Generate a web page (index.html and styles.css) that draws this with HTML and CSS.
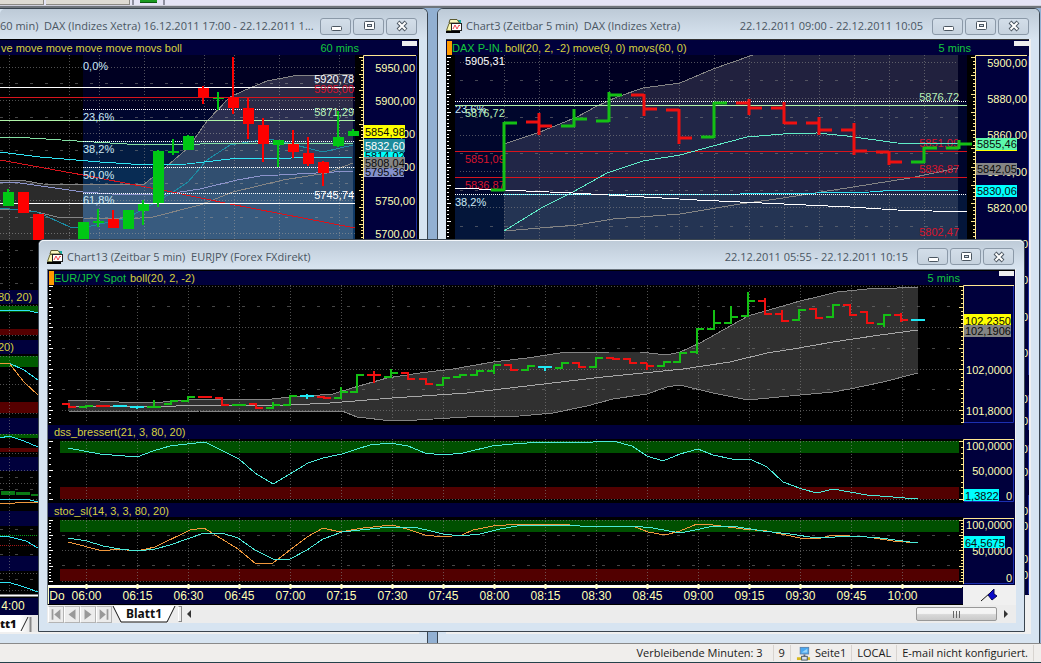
FILE: index.html
```html
<!DOCTYPE html>
<html lang="de">
<head>
<meta charset="utf-8">
<title>Chart Workspace</title>
<link rel="stylesheet" href="styles.css">
</head>
<body>
<svg class="defs" aria-hidden="true">
  <symbol id="i-min" viewBox="0 0 14 12"><rect x="2.500" y="6.500" width="10" height="4" rx="1" fill="#fff" stroke="#4b5661"/></symbol>
  <symbol id="i-max" viewBox="0 0 14 12"><rect x="2.500" y="1.500" width="10" height="8" rx="1" fill="#fff" stroke="#4b5661"/><rect x="5.500" y="4.500" width="4" height="2" fill="#d5dee8" stroke="#4b5661"/></symbol>
  <symbol id="i-close" viewBox="0 0 14 12"><path d="M3 2L11 10M11 2L3 10" stroke="#4b5661" stroke-width="4"/><path d="M3.500 2.500L10.500 9.500M10.500 2.500L3.500 9.500" stroke="#fff" stroke-width="2"/></symbol>
  <symbol id="i-chart" viewBox="0 0 16 16"><path d="M1 12L12 2H15V6L5 14Z" fill="#12a8a0"/><path d="M4 1.500H11L13.500 5H3Z" fill="#faf8c0" stroke="#5c5a30"/><path d="M.5 12.500L3 5.500H6V13Z" fill="#fbf7b0" stroke="#6a6830"/><path d="M0 14H14" stroke="#000" stroke-width="2"/><rect x="5.500" y="5.500" width="10" height="7" fill="#fff" stroke="#222"/><path d="M7 11L9 7L11 11L13 7L14 8" fill="none" stroke="#f04850"/></symbol>
</svg>

<div class="toolbar">
  <span class="tool-slot short"></span><span class="tool-slot"></span><span class="tool-sep"></span><span class="tool-green"></span><span class="tool-sep"></span>
</div>

<main class="workspace">
  <section class="window win-60">
    <header class="titlebar">
      <h2 class="title">60 min)&nbsp; DAX (Indizes Xetra) 16.12.2011 17:00 - 22.12.2011 1...</h2>
      <div class="controls">
        <button type="button" aria-label="Minimieren"><svg><use href="#i-min"/></svg></button>
        <button type="button" aria-label="Maximieren"><svg><use href="#i-max"/></svg></button>
        <button type="button" aria-label="Schließen"><svg><use href="#i-close"/></svg></button>
      </div>
    </header>
    <div class="client">
      <svg class="chart" viewBox="0 39 419 576" id="chart60">
        <rect y="39" width="419" height="576" fill="#000"/>
        <rect y="40" width="418" height="15" fill="#00003c"/>
        <rect x="402" y="41" width="15" height="5" fill="#eee"/>
        <rect x="83" y="55" width="272" height="54" fill="#000022"/>
        <rect x="83" y="109" width="272" height="32" fill="#00062e"/>
        <rect x="83" y="141" width="272" height="26" fill="#031c42"/>
        <rect x="83" y="167" width="272" height="26" fill="#082c54"/>
        <rect x="83" y="193" width="272" height="50" fill="#103a66"/>
        <g class="grid" data-x="9.5 69.5 99.5 144.500 204.5 234.5 279.5 339.5" data-y="67.5 100.5 133.5 167.5 200.5 233.5" data-dash="83.5 117.5 150.5 183.5 217.5" data-box="0 55 355 240"></g>
        <path class="band" d="M0 180H20L43 184L143 185L167 166L188 148L207 121L230 97L243 91L267 81L293 76L353 74V240H0Z"/>
        <polyline class="ln grey" points="0,180 20,180 43,184 143,185 167,166 188,148 207,121 230,97 243,91 267,81 293,76 353,74"/>
        <polyline class="ln grey" points="0,209 20,209 37,212 57,217 83,218 127,219 153,217 200,205 233,192 283,180 327,173 353,163"/>
        <polyline class="ln lav" points="0,182 20,183 83,192 127,195 167,194 200,189 237,180 260,176 353,171"/>
        <polyline class="ln teal" points="0,208 37,212 70,227 87,227 127,218 153,204 173,192 188,182 207,160 230,145 267,139 280,141 323,152 353,145"/>
        <polyline class="ln mint" points="0,137 30,138 77,141 127,144 200,144 230,143 353,143"/>
        <polyline class="ln cyan" points="0,152 40,157 100,162 147,165 187,164 230,159 353,157"/>
        <polyline class="ln red" points="0,160 83,175 167,191 230,204 355,228"/>
        <path class="ln white" d="M0 87.500H355M0 203.500H355"/>
        <path class="ln red" d="M0 97.500H355"/>
        <path class="ln pale" d="M0 120.500H355"/>
        <path class="ln dots" d="M83 109.500H355M83 141.500H355M83 167.500H355M83 193.500H355"/>
        <g id="candles60"></g>
        <path class="ticks" data-x="363" data-dir="-1" data-from="57" data-to="240" data-step="3.33"/>
        <g class="lbl">
          <text x="1" y="52" class="c-yel">ve move move move move movs boll</text>
          <text x="359" y="52" class="c-grn end">60 mins</text>
          <g class="c-fib"><text x="83" y="70">0,0%</text><text x="83" y="121">23,6%</text><text x="83" y="153">38,2%</text><text x="83" y="179">50,0%</text><text x="83" y="204">61,8%</text></g>
          <text x="354" y="83" class="end">5920,78</text><text x="354" y="93" class="end c-red">5905,00</text><text x="354" y="116" class="end c-pale">5871,29</text><text x="354" y="199" class="end">5745,74</text>
        </g>
        <rect x="363" y="55" width="54" height="185" fill="#00003c"/>
        <path d="M363.500 240V55.500H416" class="axisline"/><path d="M416.500 56V240" stroke="#1c2f9c"/>
        <g class="lbl axis">
          <text x="415" y="72">5950,00</text><text x="415" y="105">5900,00</text><text x="415" y="138">5850,00</text><text x="415" y="171">5800,00</text><text x="415" y="205">5750,00</text><text x="415" y="238">5700,00</text>
        </g>
        <g class="lbl tag">
          <rect x="364" y="168" width="40" height="9" fill="#8490cc"/><text x="365" y="176">5795,36</text>
          <rect x="364" y="151" width="40" height="11" fill="#0ff"/><text x="365" y="160">5814,02</text>
          <rect x="364" y="157" width="41" height="11" fill="#858585"/><text x="365" y="167">5808,04</text>
          <rect x="364" y="139" width="41" height="13" fill="#1c8c9c"/><text x="365" y="150" class="c-white">5832,60</text>
          <rect x="364" y="125" width="41" height="13" fill="#ff0"/><text x="365" y="136">5854,98</text>
        </g>
        <rect y="290" width="45" height="14" fill="#00003c"/>
        <rect y="306" width="45" height="6" fill="#005a00"/><rect y="329" width="45" height="6" fill="#560000"/>
        <rect y="340" width="45" height="14" fill="#00003c"/>
        <rect y="356" width="45" height="11" fill="#005a00"/><rect y="402" width="45" height="11" fill="#560000"/>
        <rect y="418" width="45" height="16" fill="#00003c"/>
        <rect y="434" width="45" height="4" fill="#005a00"/><rect y="448" width="45" height="4" fill="#560000"/>
        <rect y="457" width="45" height="14" fill="#00003c"/><rect y="511" width="45" height="15" fill="#00003c"/><rect y="556" width="45" height="15" fill="#00003c"/>
        <rect x="1" y="491" width="14" height="4" fill="#0a7a14"/><rect x="16" y="492" width="14" height="3" fill="#0a7a14"/><rect x="31" y="494" width="10" height="2" fill="#0a7a14"/>
        <g class="grid" data-x="9.5" data-y="267.5 305.5 335.5 356.5 384.5 413.5 434.5 453.5 470.5 483.5 499.5 573.5 590.5" data-dash="250.5 283.5 477.5 489.5 529.5 554.5 579.5" data-box="0 240 45 592"></g>
        <path class="ln" stroke="#0a9a1a" stroke-dasharray="1 1" d="M0 535.500H40"/><path class="ln" stroke="#a01818" stroke-dasharray="1 1" d="M0 545.500H40"/>
        <polyline class="ln cyan" points="0,311 15,310 26,310 38,313"/>
        <polyline class="ln cyan" points="0,363 9,363 24,370 38,380"/>
        <polyline class="ln orange" points="0,363 9,363 24,382 38,395"/>
        <polyline class="ln cyan" points="0,438 9,436 24,441 38,447"/>
        <polyline class="ln cyan" points="0,499 26,499 38,502"/>
        <polyline class="ln orange" points="0,503 15,503 38,502"/>
        <polyline class="ln cyan" points="0,536 10,537 26,541 38,548"/>
        <polyline class="ln cyan" points="0,583 8,582 24,587 38,592"/>
        <path d="M0 595.500H45" stroke="#fff" stroke-width="2"/>
        <rect y="598" width="45" height="17" fill="#00003c"/>
        <g class="lbl c-yel"><text x="-2" y="301">80, 20)</text><text x="-2" y="351">20)</text></g>
        <text class="time" x="13" y="610">4:00</text>
      </svg>
      <div class="tabs cut"><strong>tt1</strong><svg class="slash" viewBox="0 0 14 16"><path d="M1 15L8 1" stroke="#222"/><path d="M10.500 1V16" stroke="#888" stroke-width="2"/></svg></div>
    </div>
  </section>

  <section class="window win-c3">
    <header class="titlebar">
      <svg class="app-icon"><use href="#i-chart"/></svg>
      <h2 class="title">Chart3 (Zeitbar 5 min)&nbsp; DAX (Indizes Xetra)</h2>
      <span class="range">22.12.2011 09:00 - 22.12.2011 10:05</span>
      <div class="controls">
        <button type="button" aria-label="Minimieren"><svg><use href="#i-min"/></svg></button>
        <button type="button" aria-label="Maximieren"><svg><use href="#i-max"/></svg></button>
        <button type="button" aria-label="Schließen"><svg><use href="#i-close"/></svg></button>
      </div>
    </header>
    <div class="client">
      <svg class="chart" viewBox="446 39 585 556" id="chart3">
        <rect x="446" y="39" width="585" height="556" fill="#00003c"/>
        <rect x="446" y="39" width="585" height="1" fill="#333"/>
        <rect x="1029" y="39" width="2" height="556" fill="#f0f0f0"/>
        <rect x="446" y="55" width="529" height="190" fill="#000"/>
        <rect x="1014" y="41" width="15" height="5" fill="#eee"/>
        <rect x="447" y="41" width="5" height="14" fill="#ff9a00"/>
        <rect x="455" y="55" width="512" height="47" fill="#000022"/><rect x="455" y="102" width="512" height="92" fill="#00062c"/><rect x="455" y="194" width="512" height="50" fill="#04163a"/>
        <path class="band soft" d="M504 144L540 132L577 117L597 106L617 97L643 88L680 83L713 69L753 55H958V244H504Z"/>
        <g class="grid" data-x="504.5 539.5 574.5 609.5 644.5 679.5 714.5 749.5 784.5 819.5 854.5 889.5 924.5" data-y="62.5 98.5 135.5 171.5 207.5" data-dash="80.5 117.5 153.5 190.5 226.5" data-box="460 55 958 240"></g>
        <polyline class="ln grey" points="504,144 540,132 577,117 597,106 617,97 643,88 680,83 713,69 753,55"/>
        <polyline class="ln grey" points="504,231 577,225 613,219 680,214 740,204 783,198 853,187 910,178 958,168"/>
        <g class="lbl"><text x="465" y="65">5905,31</text><text x="455" y="113" class="c-fib">23,6%</text><text x="465" y="117" class="c-pale">5876,72</text><text x="465" y="163" class="c-red">5851,09</text><text x="465" y="189" class="c-red">5836,87</text><text x="455" y="206" class="c-fib">38,2%</text>
          <text x="959" y="101" class="end c-pale">5876,72</text><text x="959" y="147" class="end c-red">5851,09</text><text x="959" y="173" class="end c-red">5836,87</text><text x="959" y="236" class="end c-red">5802,47</text></g>
        <path class="ln pale" d="M455 105.500H967"/><path class="ln red" d="M455 151.500H967M455 177.500H967"/>
        <polyline class="ln aqua" points="504,231 543,207 573,192 607,173 643,161 680,155 713,146 747,137 783,134 817,133 847,136 897,143 958,144"/>
        <polyline class="ln cyan" points="504,195 740,194 817,193 870,192 897,190 958,190"/>
        <path class="ln dots" d="M455 101.500H967M455 194.500H967"/>
        <polyline class="ln white" points="455,188 573,193 697,200 740,202 850,207 897,210 967,212"/>
        <g id="bars3" class="thick"></g>
        <path class="ticks pale-ticks" data-x="447" data-dir="1" data-from="57" data-to="240" data-step="3.65"/>
        <path class="ticks" data-x="975" data-dir="-1" data-from="57" data-to="240" data-step="3.65"/>
        <path d="M975.500 240V55.500H1027" class="axisline"/><path d="M1028.500 56V375M1028.500 395V430M1028.500 445V480M1028.500 495V594" stroke="#1c2f9c"/>
        <g class="lbl"><text x="452" y="52" class="c-grn">DAX P-IN.</text><text x="505" y="52" class="c-yel">boll(20, 2, -2) move(9, 0) movs(60, 0)</text><text x="971" y="52" class="c-grn end">5 mins</text></g>
        <g class="lbl axis"><text x="1027" y="67">5900,00</text><text x="1027" y="103">5880,00</text><text x="1027" y="139">5860,00</text><text x="1027" y="176">5840,00</text><text x="1027" y="212">5820,00</text><text x="1028" y="248">5800,00</text><text x="1028" y="284">5780,00</text><text x="1028" y="321">5760,00</text><text x="1028" y="357">5740,00</text><text x="1028" y="403">100,00</text><text x="1028" y="425">0</text><text x="1028" y="453">100,00</text><text x="1028" y="476">0</text><text x="1028" y="515">50,00</text><text x="1028" y="530">0</text><text x="1028" y="563">50,00</text><text x="1028" y="579">0</text></g>
        <g class="lbl tag"><rect x="976" y="138" width="41" height="12" fill="#5cf8ac"/><rect x="976" y="150" width="41" height="1" fill="#ff0"/><text x="977" y="148">5855,46</text><rect x="976" y="163" width="41" height="12" fill="#858585"/><text x="977" y="173">5842,05</text><rect x="976" y="185" width="41" height="12" fill="#0ff"/><text x="977" y="195">5830,06</text></g>
      </svg>
    </div>
  </section>

  <section class="window win-c13">
    <header class="titlebar">
      <svg class="app-icon"><use href="#i-chart"/></svg>
      <h2 class="title">Chart13 (Zeitbar 5 min)&nbsp; EURJPY (Forex FXdirekt)</h2>
      <span class="range">22.12.2011 05:55 - 22.12.2011 10:15</span>
      <div class="controls">
        <button type="button" aria-label="Minimieren"><svg><use href="#i-min"/></svg></button>
        <button type="button" aria-label="Maximieren"><svg><use href="#i-max"/></svg></button>
        <button type="button" aria-label="Schließen"><svg><use href="#i-close"/></svg></button>
      </div>
    </header>
    <div class="client">
      <svg class="chart" viewBox="47 269 969 336" id="chart13">
        <rect x="47" y="269" width="969" height="336" fill="#000"/>
        <path d="M47 269.500H1016M47.500 269V605" stroke="#6c7680"/>
        <rect x="48" y="271" width="967" height="14" fill="#00003c"/><rect x="48" y="425" width="967" height="14" fill="#00003c"/><rect x="48" y="503" width="967" height="14" fill="#00003c"/>
        <rect x="963" y="271" width="52" height="314" fill="#00003c"/>
        <rect x="999" y="271" width="15" height="5" fill="#eee"/>
        <rect x="49" y="271" width="5" height="14" fill="#ff9a00"/>
        <path fill="#303030" d="M68 400L100 401L137 403L163 402L200 399H272L290 397L320 395L333 394L352 388L387 378L420 373L453 369L493 362L527 358L560 353L610 352H640L667 355L680 352L700 343L748 316L800 301L817 297L837 292L867 289L897 288L918 287V373L883 382L850 389L833 392L800 395L748 400L713 393L680 385L667 387L647 394L613 399L587 406L553 413L520 416L467 417L417 420L392 421L357 417L342 411H200L163 412L68 411Z"/>
        <rect x="60" y="441" width="899" height="12" fill="#005000"/><rect x="60" y="487" width="899" height="12" fill="#520000"/>
        <rect x="60" y="520" width="899" height="12" fill="#005000"/><rect x="60" y="569" width="899" height="12" fill="#520000"/>
        <g class="grid" data-x="86.5 137.5 188.5 239.5 290.5 341.5 392.5 443.5 494.5 545.5 596.5 647.5 698.5 749.5 800.5 851.5 902.5" data-y="286.5 327.5 369.5 410.5" data-dash="306.5 348.5 389.5" data-box="62 285 959 423"></g>
        <g class="grid" data-x="86.5 137.5 188.5 239.5 290.5 341.5 392.5 443.5 494.5 545.5 596.5 647.5 698.5 749.5 800.5 851.5 902.5" data-y="441.5 470.5 499.5" data-dash="" data-box="62 439 959 502"></g>
        <g class="grid" data-x="86.5 137.5 188.5 239.5 290.5 341.5 392.5 443.5 494.5 545.5 596.5 647.5 698.5 749.5 800.5 851.5 902.5" data-y="520.5 550.5 581.5" data-dash="535.5 565.5" data-box="62 518 959 584"></g>
        <polyline class="ln grey" points="68,400 100,401 137,403 163,402 200,399 272,399 290,397 320,395 333,394 352,388 387,378 420,373 453,369 493,362 527,358 560,353 610,352 640,352 667,355 680,352 700,343 748,316 800,301 817,297 837,292 867,289 897,288 918,287"/>
        <polyline class="ln grey" points="68,411 163,412 200,411 342,411 357,417 392,421 417,420 467,417 520,416 553,413 587,406 613,399 647,394 667,387 680,385 713,393 748,400 800,395 833,392 850,389 883,382 918,373"/>
        <polyline class="ln light" points="68,406 153,407 200,405 290,405 330,403 392,398 467,393 527,386 603,377 683,369 730,362 767,353 793,349 833,342 880,335 918,330"/>
        <g id="bars13"></g>
        <polyline class="ln aqua2" points="68,448 100,454 137,457 153,451 170,446 187,444 205,442 217,448 239,459 255,473 273,484 290,474 308,463 323,458 342,454 357,449 370,445 390,443 408,446 425,453 443,455 463,453 492,446 513,444 527,443 553,442 583,443 603,441 613,441 632,446 647,456 663,461 680,454 698,449 713,455 732,459 750,459 767,467 783,482 802,489 817,493 833,489 867,495 918,499"/>
        <polyline class="ln orange" points="68,542 103,551 117,549 137,551 155,547 190,530 204,528 238,549 256,564 273,563 307,537 323,528 340,532 363,528 392,525 407,529 425,535 443,537 462,535 473,530 493,526 520,524 560,524 580,526 633,526 648,532 665,535 680,531 697,524 713,525 743,529 767,531 800,538 817,539 833,535 867,537 893,541 918,543"/>
        <polyline class="ln aqua2" points="68,538 87,541 103,546 120,549 137,551 155,549 170,545 190,538 204,533 222,533 238,538 255,550 273,559 290,559 307,550 323,539 342,532 360,530 390,527 413,527 427,530 443,534 460,536 480,534 500,529 523,525 557,525 580,526 633,526 653,528 680,533 700,529 713,526 732,526 763,531 790,534 817,538 853,536 880,538 918,543"/>
        <path class="ticks pale-ticks" data-x="49" data-dir="1" data-from="286" data-to="424" data-step="4.13"/><path class="ticks" data-x="963" data-dir="-1" data-from="286" data-to="424" data-step="4.13"/>
        <path class="ticks pale-ticks" data-x="49" data-dir="1" data-from="441" data-to="501" data-step="5.8"/><path class="ticks" data-x="963" data-dir="-1" data-from="441" data-to="501" data-step="5.8"/>
        <path class="ticks pale-ticks" data-x="49" data-dir="1" data-from="520" data-to="583" data-step="3.05"/><path class="ticks" data-x="963" data-dir="-1" data-from="520" data-to="583" data-step="3.05"/>
        <path class="axisline" d="M963.500 423V285.500H1014M963.500 501V439.500H1014M963.500 584V518.500H1014"/>
        <path d="M1013.500 286V422.500H964M1013.500 440V501.500H964M1013.500 519V583.500H964" fill="none" stroke="#1c2fb0"/>
        <rect x="48" y="585" width="915" height="2" fill="#fff"/><rect x="48" y="588" width="915" height="16" fill="#00003c"/>
        <path id="timeticks" stroke="#ffffc8" stroke-width="2"/>
        <path d="M48 587.500H962M48.500 588V604" stroke="#ffffc0"/>
        <rect x="963" y="585" width="53" height="20" fill="#f0f0f0"/><rect x="1015" y="269" width="1" height="336" fill="#f0f0f0"/>
        <path d="M981 601L990 593" stroke="#111"/><path d="M988 595L994 589L994 594L997 596L992 600Z" fill="#0808c8" stroke="#080850"/>
        <g class="lbl"><text x="54" y="282" class="c-grn">EUR/JPY Spot</text><text x="130" y="282" class="c-yel">boll(20, 2, -2)</text><text x="960" y="282" class="c-grn end">5 mins</text>
          <text x="54" y="436" class="c-yel">dss_bressert(21, 3, 80, 20)</text><text x="54" y="515" class="c-yel">stoc_sl(14, 3, 3, 80, 20)</text></g>
        <g class="lbl axis"><text x="1012" y="374">102,0000</text><text x="1012" y="415">101,8000</text><text x="1012" y="450">100,0000</text><text x="1012" y="475">50,0000</text><text x="1012" y="500">0</text><text x="1012" y="529">100,0000</text><text x="1012" y="555">50,0000</text><text x="1012" y="582">0</text></g>
        <g class="lbl tag"><rect x="964" y="314" width="47" height="11" fill="#ff0"/><text x="965" y="325">102,2350</text><rect x="964" y="325" width="47" height="12" fill="#858585"/><text x="965" y="335">102,1906</text>
          <rect x="964" y="489" width="35" height="12" fill="#0ff"/><text x="965" y="500">1,3822</text><rect x="964" y="536" width="41" height="12" fill="#0ff"/><text x="965" y="547">64,5675</text></g>
        <g class="time"><text x="57" y="600">Do</text><text x="86.500" y="600">06:00</text><text x="137.500" y="600">06:15</text><text x="188.500" y="600">06:30</text><text x="239.500" y="600">06:45</text><text x="290.500" y="600">07:00</text><text x="341.500" y="600">07:15</text><text x="392.500" y="600">07:30</text><text x="443.500" y="600">07:45</text><text x="494.500" y="600">08:00</text><text x="545.500" y="600">08:15</text><text x="596.500" y="600">08:30</text><text x="647.500" y="600">08:45</text><text x="698.500" y="600">09:00</text><text x="749.500" y="600">09:15</text><text x="800.500" y="600">09:30</text><text x="851.500" y="600">09:45</text><text x="902.500" y="600">10:00</text></g>
      </svg>
      <div class="tabs">
        <button type="button" class="nav" aria-label="Erstes Blatt"><svg viewBox="0 0 16 16"><path d="M4 2V14" stroke="#999" stroke-width="2"/><path d="M13 2V14L6 8Z" fill="#999"/></svg></button>
        <button type="button" class="nav" aria-label="Vorheriges Blatt"><svg viewBox="0 0 16 16"><path d="M12 2V14L4 8Z" fill="#999"/></svg></button>
        <button type="button" class="nav" aria-label="Nächstes Blatt"><svg viewBox="0 0 16 16"><path d="M4 2V14L12 8Z" fill="#999"/></svg></button>
        <button type="button" class="nav" aria-label="Letztes Blatt"><svg viewBox="0 0 16 16"><path d="M3 2V14L10 8Z" fill="#999"/><path d="M12 2V14" stroke="#999" stroke-width="2"/></svg></button>
        <button type="button" class="tab"><svg class="tab-shape" viewBox="0 0 64 17" preserveAspectRatio="none"><path d="M1 0L9 16H55L63 0" fill="#fff" stroke="#111"/></svg><span>Blatt1</span></button>
        <span class="splitter"></span>
        <svg class="arrow" viewBox="0 0 8 8"><path d="M6 0V8L2 4Z" fill="#333"/></svg>
        <span class="track"><span class="thumb"></span></span>
        <svg class="arrow last" viewBox="0 0 8 8"><path d="M2 0V8L6 4Z" fill="#333"/></svg>
      </div>
    </div>
  </section>
</main>

<footer class="status">
  <span class="cell first">Verbleibende Minuten: 3</span>
  <span class="cell">9</span>
  <span class="cell page"><svg viewBox="0 0 16 16"><rect x="4.500" y="1.500" width="9" height="7" fill="#4aa8f0" stroke="#5a84b0"/><path d="M6 7L12 3V7Z" fill="#9ad4fa"/><path d="M9 9V12" stroke="#667" stroke-width="2"/><path d="M1 13.500H15" stroke="#d8b820" stroke-width="3"/><rect x="6" y="11" width="6" height="4" fill="#d8dfe8" stroke="#456"/></svg>Seite1</span>
  <span class="cell">LOCAL</span>
  <span class="cell">E-mail nicht konfiguriert.</span>
</footer>
<script src="charts.js"></script>
</body>
</html>
```
FILE: styles.css
```css
* { box-sizing: border-box; }
html, body { height: 100%; margin: 0; }
body {
  display: flex;
  flex-direction: column;
  overflow: hidden;
  background: #f0eeec;
  color: #1a1a1a;
  font: 11px/16px "Open Sans", "Noto Sans", sans-serif;
}
button { padding: 0; margin: 0; border: 0; background: none; font: inherit; color: inherit; }
.defs { position: absolute; width: 0; height: 0; }

.toolbar {
  display: flex;
  gap: 2px;
  flex: none;
  height: 8px;
  background: linear-gradient(#e4e4f6 0 5px, #d0d0dc 5px 6px, #6f757c 6px 8px);
}
.tool-slot { width: 84px; height: 5px; background: #dedbd3; border: solid #8c8a84; border-width: 0 1px 1px 0; }
.tool-slot.short { width: 44px; }
.tool-sep { width: 2px; height: 5px; background: #8e90a0; }
.tool-green { width: 17px; height: 3px; margin: 0 4px; background: #1a9a20; border-bottom: 1px solid #0a5a10; }

.workspace { position: relative; flex: 1; overflow: hidden; background: #92b0d2; }

.window {
  position: absolute;
  display: flex;
  flex-direction: column;
  padding: 0 8px 9px;
  border: 1px solid #39444f;
  border-radius: 6px 6px 0 0;
  background: #d7e4f1;
}
.win-60 { left: 0; top: 0; bottom: -1px; width: 428px; padding-left: 0; border-left: 0; border-top-left-radius: 0; }
.win-c3 { left: 437px; right: 1px; top: 0; bottom: -1px; }
.win-c13 { left: 38px; right: 16px; top: 231px; padding-bottom: 8px; }

.titlebar {
  display: flex;
  align-items: center;
  gap: 4px;
  flex: none;
  height: 30px;
  margin: 0 -8px;
  padding: 7px 10px 3px 8px;
  border-radius: 5px 5px 0 0;
  background: linear-gradient(#bdcad7, #d8e4f0);
  color: #4a5662;
  white-space: nowrap;
}
.win-60 .titlebar { margin-left: 0; padding-left: 0; }
.win-c13 .titlebar { height: 29px; box-shadow: inset 0 1px #f4f8fc; }
.title { margin: 0; font-size: 11px; font-weight: 400; }
.range { margin-left: auto; }
.controls { display: flex; gap: 2px; margin-left: auto; }
.range + .controls { margin-left: 5px; }
.controls button {
  display: grid;
  place-items: center;
  width: 31px;
  height: 17px;
  border: 1px solid #8b99a8;
  border-radius: 3px;
  background: linear-gradient(#d3dee9, #c6d2de);
}
.controls svg { display: block; width: 14px; height: 12px; }
.app-icon { flex: none; width: 16px; height: 16px; }

.client { display: flex; flex-direction: column; flex: 1; min-height: 0; background: #f0f0f0; }
.chart { display: block; flex: none; width: 100%; height: auto; }

.lbl { fill: #fff; font: 11px "Liberation Sans", Arial, sans-serif; }
.lbl.axis { fill: #ffffb4; text-anchor: end; }
.lbl.tag { fill: #0a0a0a; }
.lbl .end { text-anchor: end; }
.time { fill: #ffffb0; font: 12px "Liberation Sans", Arial, sans-serif; text-anchor: middle; }
.c-yel { fill: #d6d03c; }
.c-grn { fill: #14c83c; }
.c-red { fill: #d8142c; }
.c-pale { fill: #b8f0b8; }
.c-fib { fill: #cdeaf6; }
.c-white { fill: #fff; }

.ln { fill: none; stroke-width: 1; shape-rendering: crispEdges; }
.grey { stroke: #858585; }
.light { stroke: #a8a8a8; }
.lav { stroke: #8c94cc; }
.teal { stroke: #1c8ca4; }
.mint { stroke: #84e0a4; }
.aqua { stroke: #60ecc8; }
.aqua2 { stroke: #4cead8; }
.cyan { stroke: #30e4f4; }
.orange { stroke: #f0983c; }
.red { stroke: #d8141c; }
.white { stroke: #fff; }
.pale { stroke: #b0f4a8; }
.dots { stroke: #fff; stroke-dasharray: 1 1; }
.band { fill: #fff; fill-opacity: .17; }
.band.soft { fill-opacity: .13; }
.axisline { fill: none; stroke: #ffe890; }
.ticks { stroke: #ffe890; fill: none; }
.pale-ticks { stroke: #fff; }
.grid .dot { stroke: #858585; stroke-opacity: .6; stroke-dasharray: 1 2; fill: none; }
.grid .dash { stroke: #808080; stroke-opacity: .55; stroke-dasharray: 3 12; fill: none; }
.up { stroke: #14c014; }
.down { stroke: #f01010; }
.flat { stroke: #20e8f4; }
.body-up { fill: #00c814; }
.body-down { fill: #f00; }
#bars13 path { stroke-width: 2; fill: none; }
.thick path { stroke-width: 3; fill: none; }

.tabs { display: flex; align-items: center; height: 18px; padding-left: 1px; background: #ececec; color: #111; }
.nav { width: 16px; height: 17px; border: 1px solid #b4b4b4; border-left-color: #fff; }
.nav svg { display: block; width: 14px; height: 15px; }
.tab { position: relative; width: 64px; height: 17px; font: bold 12px/16px "Noto Sans", sans-serif; }
.tab-shape { position: absolute; inset: 0; width: 100%; height: 100%; }
.tab span { position: relative; }
.splitter { width: 4px; height: 16px; margin-left: 2px; border: 1px solid #888; border-left-color: #fff; }
.arrow { width: 8px; height: 8px; margin-left: 3px; }
.arrow.last { margin: 0 6px 0 5px; }
.track { display: flex; flex: 1; justify-content: flex-end; }
.thumb {
  width: 81px;
  height: 14px;
  border: 1px solid #989898;
  border-radius: 2px;
  background:
    repeating-linear-gradient(90deg, #666 0 1px, transparent 1px 3px) center / 8px 7px no-repeat,
    linear-gradient(#f4f4f4 0 45%, #d8d8d8 55%, #cacaca);
}
.tabs.cut { height: 17px; padding: 0; background: linear-gradient(90deg, #fff 20px, #e8e8e8 30px); font: bold 11px/16px "Noto Sans", sans-serif; }
.slash { width: 14px; height: 16px; margin-left: 3px; }

.status {
  display: flex;
  justify-content: flex-end;
  align-items: center;
  flex: none;
  height: 20px;
  padding-right: 7px;
  border-top: 1px solid #8a8a8a;
  border-bottom: 1px solid #24414a;
  background: #f0eeec;
  white-space: nowrap;
}
.cell { padding: 0 5px; border-right: 1px solid #d8d4d0; }
.cell.first { padding-right: 10px; }
.page { display: flex; align-items: center; gap: 4px; }
.page svg { width: 15px; height: 15px; }
```
FILE: charts.js
```javascript
const NS = 'http://www.w3.org/2000/svg';

function add(parent, tag, attrs) {
  const el = document.createElementNS(NS, tag);
  for (const key in attrs) el.setAttribute(key, attrs[key]);
  parent.appendChild(el);
}

function numbers(text) {
  return text.split(' ').filter(Boolean).map(Number);
}

// Grid: dotted lines for major values, sparse dashes for the midpoints.
document.querySelectorAll('.grid').forEach((g) => {
  const [x1, y1, x2, y2] = numbers(g.dataset.box);
  const major = numbers(g.dataset.x).map((x) => `M${x} ${y1}V${y2}`)
    .concat(numbers(g.dataset.y).map((y) => `M${x1} ${y}H${x2}`)).join('');
  const minor = numbers(g.dataset.dash).map((y) => `M${x1} ${y}H${x2}`).join('');
  add(g, 'path', { class: 'dot', d: major });
  add(g, 'path', { class: 'dash', d: minor });
});

// Scale ticks, drawn from the axis into the plot; every fifth one is longer.
document.querySelectorAll('.ticks').forEach((p) => {
  const { x, dir, from, to, step } = p.dataset;
  let d = '';
  for (let y = +from, i = 0; y < +to; y += +step, i += 1) {
    d += `M${x} ${Math.round(y) + 0.5}h${dir * (i % 5 ? 2 : 4)}`;
  }
  p.setAttribute('d', d);
});

// Open/high/low/close bars: [kind, x, open, close, high, low]
function drawBars(id, rows, tick) {
  const group = document.getElementById(id);
  rows.forEach(([kind, x, open, close, high, low]) => {
    const top = high || Math.min(open, close) - 1;
    const bottom = low || Math.max(open, close) + 1;
    add(group, 'path', {
      class: { g: 'up', r: 'down', c: 'flat' }[kind],
      d: `M${x - tick} ${open}H${x}M${x} ${top}V${bottom}M${x} ${close}h${tick}`,
    });
  });
}

drawBars('bars13', [
  ['r', 69, 404, 407], ['g', 86, 407, 406], ['r', 103, 406, 406], ['c', 120, 406, 406],
  ['c', 137, 407, 407, 406, 409], ['g', 154, 407, 407, 400, 408], ['g', 171, 404, 401], ['g', 188, 401, 397],
  ['r', 205, 397, 397], ['r', 222, 398, 405], ['g', 239, 405, 405], ['r', 256, 404, 408],
  ['g', 273, 408, 405, 402, 409], ['g', 290, 405, 396], ['c', 307, 396, 396, 394, 399], ['r', 324, 397, 398],
  ['g', 341, 398, 392, 387, 399], ['g', 357, 392, 375], ['r', 374, 375, 375, 371, 383], ['g', 391, 377, 373, 369],
  ['r', 408, 373, 379], ['r', 426, 379, 384], ['g', 443, 385, 378], ['g', 460, 377, 375],
  ['g', 477, 375, 371], ['g', 494, 371, 365, 365, 374], ['r', 511, 365, 370], ['g', 528, 370, 366],
  ['c', 545, 367, 367, 367, 371], ['g', 562, 368, 363], ['r', 579, 363, 367], ['g', 596, 367, 358],
  ['r', 613, 358, 359], ['r', 630, 359, 363], ['r', 647, 363, 366, 363, 370], ['g', 664, 366, 362],
  ['g', 680, 362, 353], ['g', 697, 352, 329, 328, 354], ['g', 714, 329, 323, 310, 330], ['g', 731, 323, 317, 306],
  ['g', 748, 316, 301, 292], ['r', 765, 301, 314, 298], ['r', 782, 314, 321, 310], ['g', 799, 320, 310],
  ['r', 816, 309, 318], ['g', 833, 317, 305], ['r', 850, 305, 315], ['r', 867, 312, 323],
  ['g', 884, 324, 315, 314, 327], ['r', 901, 315, 320, 313, 322], ['c', 918, 320, 320],
], 7);

drawBars('bars3', [
  ['g', 504, 190, 123], ['r', 539, 122, 126, 113, 135], ['g', 574, 126, 119, 109], ['g', 609, 121, 95, 92],
  ['r', 644, 95, 109, 94, 116], ['r', 679, 110, 138, 109, 144], ['g', 714, 137, 103], ['r', 749, 103, 108, 99, 115],
  ['r', 784, 108, 123, 102], ['r', 819, 123, 130, 117, 135], ['r', 854, 130, 151, 123, 155],
  ['r', 889, 152, 162, 151, 165], ['g', 924, 162, 148], ['g', 959, 148, 144, 140],
], 13);

// Candles: [kind, centre x, body top, body bottom, wick top, wick bottom]
[
  ['up', 8, 192, 206, 189, 206], ['down', 23, 192, 213, 192, 213], ['down', 38, 214, 240, 214, 240],
  ['up', 83, 222, 240, 222, 240], ['up', 98, 221, 223, 209, 227], ['down', 113, 219, 228, 210, 228],
  ['up', 128, 210, 229, 210, 229], ['up', 143, 204, 211, 200, 225], ['up', 158, 151, 203, 150, 207],
  ['up', 173, 151, 153, 139, 155], ['up', 188, 136, 150, 135, 150], ['down', 203, 88, 97, 86, 104],
  ['up', 218, 98, 99, 92, 110], ['down', 233, 97, 108, 57, 114], ['down', 248, 108, 124, 98, 139],
  ['down', 263, 125, 144, 118, 162], ['up', 278, 140, 145, 140, 167], ['down', 293, 144, 152, 130, 158],
  ['down', 308, 153, 164, 137, 166], ['down', 323, 162, 173, 161, 186], ['up', 338, 137, 146, 111, 147],
  ['up', 353, 131, 136, 129, 136],
].forEach(([kind, x, top, bottom, high, low]) => {
  const group = document.getElementById('candles60');
  const paint = `body-${kind}`;
  add(group, 'rect', { class: paint, x: x - 5, y: top, width: 11, height: bottom - top });
  add(group, 'rect', { class: paint, x: x - 1, y: high, width: 2, height: low - high });
});

// Time axis marks every 15 minutes.
document.getElementById('timeticks').setAttribute('d',
  Array.from({ length: 17 }, (_, i) => `M${86.5 + i * 51} 584v5`).join(''));
```
